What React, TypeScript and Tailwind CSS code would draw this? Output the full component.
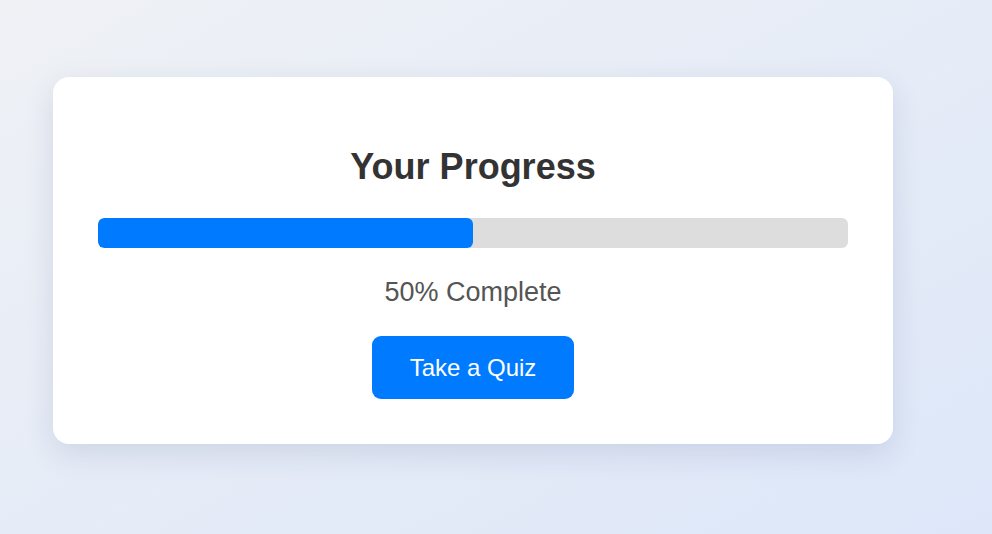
export default function App() {
    const percent = 50;

    return (
        <div
            className="min-h-screen bg-linear-to-br from-[#eff1f5] to-[#dde7f9] pl-[53px] pt-[77px]"
            style={{ fontFamily: '"Liberation Sans", Arial, sans-serif' }}
        >
            <div className="w-[840px] rounded-[16px] bg-white px-[45px] pt-[45px] pb-[45px] text-center shadow-[0_10px_30px_rgba(30,50,100,0.12)]">
                <h2 className="mt-[24px] mb-[31px] text-[36px] leading-[41px] font-bold text-[#333]">
                    Your Progress
                </h2>

                <div className="h-[30px] w-full overflow-hidden rounded-[6px] bg-[#ddd]">
                    <div
                        className="h-full rounded-[6px] bg-[#007bff]"
                        style={{ width: `${percent}%` }}
                    />
                </div>

                <p className="mt-[29px] text-[27px] leading-[31px] text-[#555]">
                    {percent}% Complete
                </p>

                <button className="mt-[28px] h-[63px] w-[202px] rounded-[9px] bg-[#007bff] text-[24px] text-white">
                    Take a Quiz
                </button>
            </div>
        </div>
    );
}
